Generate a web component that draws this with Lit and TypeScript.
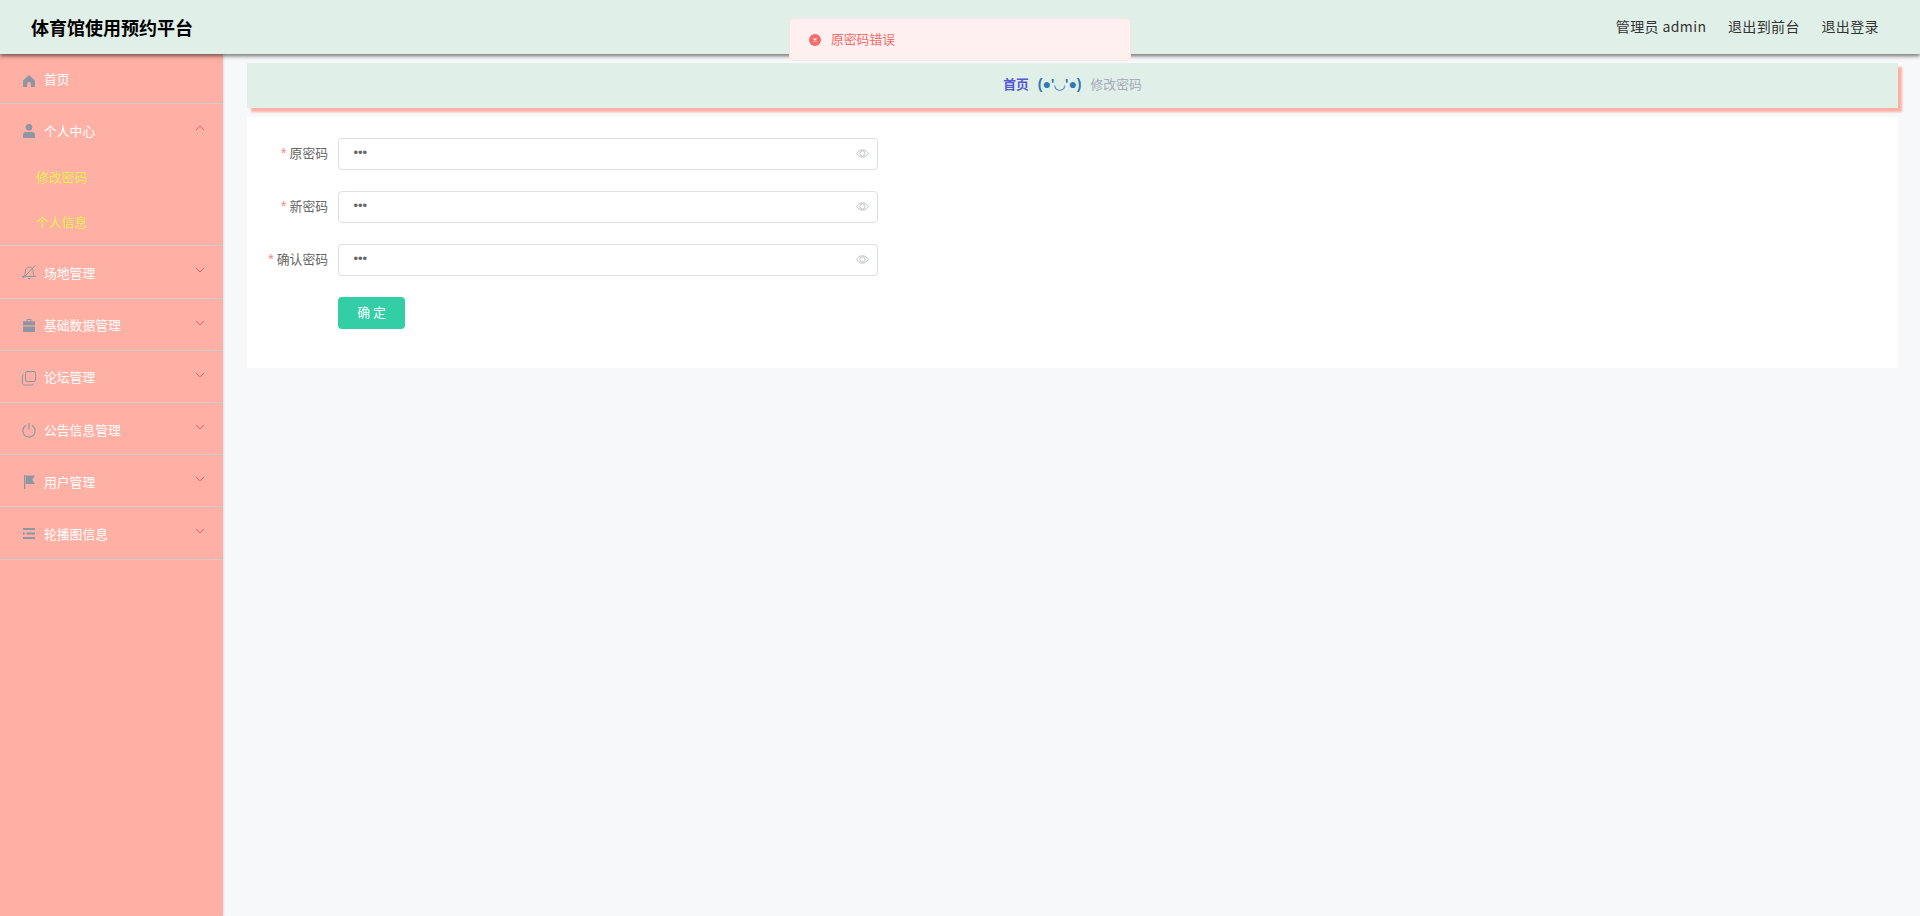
import { LitElement, html, css, svg } from "lit";
import { customElement } from "lit/decorators.js";

const C = "#8f96a3";
const icons: Record<string, any> = {
  home: svg`<path fill="${C}" d="M7 4 1 9.500V16h4.200v-3.200a1.800 1.800 0 0 1 3.600 0V16H13V9.500z"/>`,
  user: svg`<circle cx="7" cy="4.300" r="3.300" fill="${C}"/><path fill="${C}" d="M1 11.500C1 10 2.200 9 3.500 9h7C11.800 9 13 10 13 11.500V15H1z"/>`,
  bell: svg`<g fill="none" stroke="${C}" stroke-width="1"><path d="M0 11.500h14M1.800 11.500C3 10 3.200 8.500 3.200 6.800 3.200 4 4.800 2 7.200 2s4 2 4 4.800c0 1.700.2 3.200 1.300 4.700M6 13.500h2.500M.8 13.300 13.300.5"/></g>`,
  case: svg`<path fill="${C}" d="M4.500 3.300V1h5v2.300H13v4.200H1V3.300zm1 0h3V2h-3zM1 8.500h12V14H1z"/>`,
  copy: svg`<g fill="none" stroke="${C}" stroke-width="1"><rect x="3.500" y="1.500" width="10" height="10" rx="1.500"/><path d="M1.700 4C.9 4.300.5 4.900.5 5.700v7.300c0 1.200.8 2 2 2h7.300c.9 0 1.500-.4 1.700-1.200"/></g>`,
  power: svg`<g fill="none" stroke="${C}" stroke-width="1.200"><path d="M4 3.400a6.200 6.200 0 1 0 6 0"/><path d="M7 1v6.500"/></g>`,
  flag: svg`<path fill="${C}" d="M2 1h1.300v14H2zM3.800 1.500H13l-2.800 4.200L13 10H3.800z"/>`,
  list: svg`<path fill="${C}" d="M1 2h12v1.900H1zM4.500 6.600H13v1.800H4.500zM1 11h12v2H1zM1 6l2.500 1.500L1 9.200z"/>`,
};

const menu = [
  { icon: "home", label: "首页" },
  { icon: "user", label: "个人中心", open: true, children: ["修改密码", "个人信息"] },
  { icon: "bell", label: "场地管理", arrow: true },
  { icon: "case", label: "基础数据管理", arrow: true },
  { icon: "copy", label: "论坛管理", arrow: true },
  { icon: "power", label: "公告信息管理", arrow: true },
  { icon: "flag", label: "用户管理", arrow: true },
  { icon: "list", label: "轮播图信息", arrow: true },
];

@customElement("app-root")
export class AppRoot extends LitElement {
  static styles = css`
    :host {
      display: block;
      height: 916px;
      overflow: hidden;
      background: #f7f8fa;
      font-family: "Noto Sans CJK SC", "Noto Sans", sans-serif;
      font-size: 12.800px;
      position: relative;
    }
    .top {
      height: 54px;
      background: #e0efe7;
      box-shadow: 0 2px 4px rgba(0, 0, 0, 0.55);
      display: flex;
      align-items: center;
      padding: 0 41px 0 31px;
      position: relative;
      z-index: 2;
    }
    .brand {
      font-size: 18px;
      font-weight: 700;
      color: #000;
      flex: 1;
      line-height: 54px;
      margin-top: -1px;
    }
    .top-links {
      display: flex;
      gap: 21.500px;
      color: #333;
      font-size: 14px;
      letter-spacing: 0.4px;
      margin-top: -2px;
    }
    .body {
      display: flex;
      height: 862px;
    }
    .side {
      width: 223px;
      background: #ffb0a4;
      box-shadow: 1px 0 2px rgba(190, 190, 190, 0.4);
      flex: none;
    }
    .list {
      margin-top: -2px;
    }
    .item {
      border-bottom: 1px solid #d2cccc;
    }
    .row {
      height: 51.200px;
      box-sizing: border-box;
      padding: 3px 0 0 22px;
      display: flex;
      align-items: center;
      color: #fff;
      position: relative;
    }
    .row span {
      margin-top: -2px;
    }
    .ico {
      width: 16px;
      height: 16px;
      margin-right: 6px;
      flex: none;
      overflow: visible;
    }
    .chev {
      position: absolute;
      right: 18px;
      top: 21px;
      width: 10px;
      height: 6px;
    }
    .sub {
      height: 45px;
      display: flex;
      align-items: center;
      padding-left: 36px;
      color: #e9ee4f;
    }
    .subs {
      margin-top: -1.500px;
      padding-bottom: 1.500px;
    }
    .main {
      flex: 1;
      padding: 9px 22px 0 24px;
      min-width: 0;
    }
    .crumb {
      height: 45px;
      box-sizing: border-box;
      padding-bottom: 4px;
      background: #e0efe7;
      box-shadow: 4px 4px 2px #ffb0a4;
      display: flex;
      align-items: center;
      justify-content: center;
      gap: 9px;
      color: #a4aabb;
    }
    .crumb b {
      color: #5359d6;
      font-weight: 700;
    }
    .crumb i {
      font-style: normal;
      font-weight: 700;
      font-family: "Liberation Sans", "DejaVu Sans", sans-serif;
      color: #2f77b5;
      font-size: 14px;
    }
    .card {
      margin-top: 9px;
      height: 251px;
      background: #fff;
      padding-top: 21px;
      box-sizing: border-box;
    }
    .field {
      display: flex;
      align-items: center;
      height: 32px;
      margin-bottom: 21px;
    }
    .lab {
      width: 81px;
      text-align: right;
      color: #666;
      margin-right: 10px;
      flex: none;
      margin-top: -3px;
    }
    .lab em {
      color: #f78989;
      font-style: normal;
      font-family: "Liberation Sans", sans-serif;
      font-size: 15px;
      line-height: 1;
      margin-right: 3px;
    }
    .inp {
      width: 540px;
      height: 32px;
      box-sizing: border-box;
      border: 1px solid #dcdfe6;
      border-radius: 4px;
      display: flex;
      align-items: center;
      padding: 0 8px 0 14.500px;
      justify-content: space-between;
    }
    .inp span {
      color: #666;
      font-family: "Liberation Sans", sans-serif;
      font-size: 13px;
      margin-top: -3px;
    }
    .eye {
      width: 13px;
      height: 13px;
      margin-top: -1px;
    }
    .btn {
      margin-left: 91px;
      width: 67px;
      height: 32px;
      background: #33cda6;
      color: #fff;
      border-radius: 4px;
      display: flex;
      align-items: center;
      justify-content: center;
      letter-spacing: 3px;
      text-indent: 3px;
      padding-bottom: 3px;
      box-sizing: border-box;
    }
    .toast {
      position: absolute;
      left: 789px;
      top: 18px;
      width: 342px;
      height: 43px;
      box-sizing: border-box;
      background: #fef0f0;
      border: 1px solid #fde2e2;
      border-radius: 4px;
      display: flex;
      align-items: center;
      padding-left: 19px;
      gap: 10px;
      color: #f56c6c;
      z-index: 5;
    }
    .toast svg {
      width: 12px;
      height: 12px;
      flex: none;
    }
    .toast span {
      margin-top: -2px;
    }
  `;

  render() {
    return html`
      <div class="top">
        <div class="brand">体育馆使用预约平台</div>
        <div class="top-links">
          <span>管理员 admin</span><span>退出到前台</span><span>退出登录</span>
        </div>
      </div>
      <div class="toast">
        <svg viewBox="0 0 13 13">
          <circle cx="6.500" cy="6.500" r="6.500" fill="#f56c6c" />
          <path d="M4.800 4.800l3.400 3.400M8.200 4.800 4.800 8.200" stroke="#fff" stroke-width="1.100" />
        </svg>
        <span>原密码错误</span>
      </div>
      <div class="body">
        <nav class="side">
          <div class="list">
            ${menu.map(
              (m) => html`<div class="item">
                <div class="row">
                  <svg class="ico" viewBox="0 0 16 16">${icons[m.icon]}</svg>
                  <span>${m.label}</span>
                  ${m.open || m.arrow
                    ? html`<svg class="chev" viewBox="0 0 10 6">
                        <path
                          d=${m.open ? "M1 5 5 1l4 4" : "M1 1l4 4 4-4"}
                          fill="none"
                          stroke="#f4565e"
                          stroke-width=".9"
                        />
                      </svg>`
                    : ""}
                </div>
                ${m.children
                  ? html`<div class="subs">
                      ${m.children.map((c) => html`<div class="sub">${c}</div>`)}
                    </div>`
                  : ""}
              </div>`
            )}
          </div>
        </nav>
        <main class="main">
          <div class="crumb"><b>首页</b><i>(●'◡'●)</i><span>修改密码</span></div>
          <div class="card">
            ${["原密码", "新密码", "确认密码"].map(
              (l) => html`<div class="field">
                <div class="lab"><em>*</em>${l}</div>
                <div class="inp">
                  <span>•••</span>
                  <svg class="eye" viewBox="0 0 14 14" fill="none" stroke="#b9bdc6" stroke-width="1">
                    <path d="M.7 7C2.200 4.500 4.500 3 7 3s4.800 1.500 6.300 4C11.800 9.500 9.500 11 7 11S2.200 9.500.7 7z" />
                    <circle cx="7" cy="7" r="2.800" />
                  </svg>
                </div>
              </div>`
            )}
            <div class="btn">确定</div>
          </div>
        </main>
      </div>
    `;
  }
}
